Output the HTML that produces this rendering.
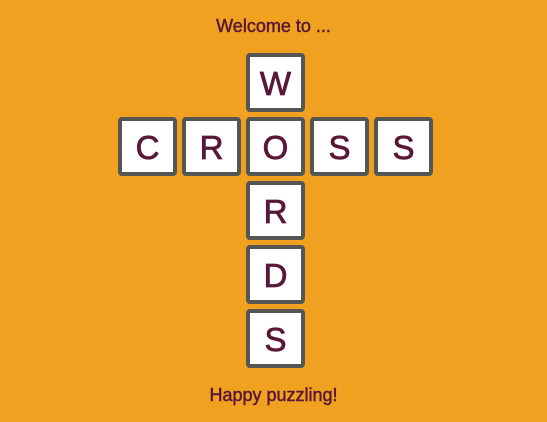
<!DOCTYPE html>
<html><head><style>
body{margin:0;width:547px;height:422px;background:#f0a120;font-family:"Liberation Sans",sans-serif;position:relative;overflow:hidden}
.t{position:absolute;left:0;width:547px;text-align:center;color:#5a1838;font-size:18px;-webkit-text-stroke:0.5px #5a1838}
.c{position:absolute;width:51px;height:51px;border:4px solid #555;border-radius:4px;background:#fff;color:#5a1838;font-size:33px;line-height:53px;text-align:center;-webkit-text-stroke:0.8px #5a1838}
</style></head><body>
<div class="t" style="top:16px">Welcome to ...</div>
<div class="c" style="left:246px;top:53px">W</div>
<div class="c" style="left:118px;top:117px">C</div>
<div class="c" style="left:182px;top:117px">R</div>
<div class="c" style="left:246px;top:117px">O</div>
<div class="c" style="left:310px;top:117px">S</div>
<div class="c" style="left:374px;top:117px">S</div>
<div class="c" style="left:246px;top:181px">R</div>
<div class="c" style="left:246px;top:245px">D</div>
<div class="c" style="left:246px;top:309px">S</div>
<div class="t" style="top:385px">Happy puzzling!</div>
</body></html>
